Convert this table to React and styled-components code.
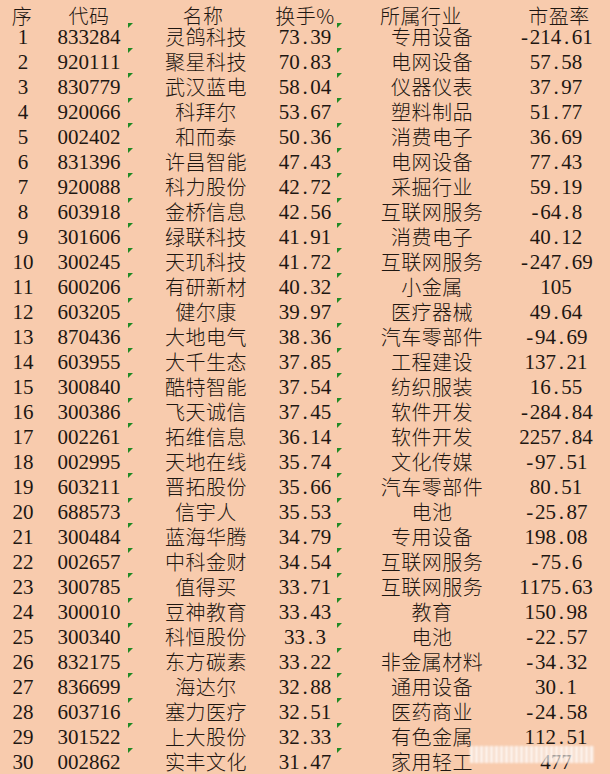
import React from "react";
import styled, { createGlobalStyle } from "styled-components";

const rows = [
  ["1", "833284", "灵鸽科技", "73.39", "专用设备", "-214.61"],
  ["2", "920111", "聚星科技", "70.83", "电网设备", "57.58"],
  ["3", "830779", "武汉蓝电", "58.04", "仪器仪表", "37.97"],
  ["4", "920066", "科拜尔", "53.67", "塑料制品", "51.77"],
  ["5", "002402", "和而泰", "50.36", "消费电子", "36.69"],
  ["6", "831396", "许昌智能", "47.43", "电网设备", "77.43"],
  ["7", "920088", "科力股份", "42.72", "采掘行业", "59.19"],
  ["8", "603918", "金桥信息", "42.56", "互联网服务", "-64.8"],
  ["9", "301606", "绿联科技", "41.91", "消费电子", "40.12"],
  ["10", "300245", "天玑科技", "41.72", "互联网服务", "-247.69"],
  ["11", "600206", "有研新材", "40.32", "小金属", "105"],
  ["12", "603205", "健尔康", "39.97", "医疗器械", "49.64"],
  ["13", "870436", "大地电气", "38.36", "汽车零部件", "-94.69"],
  ["14", "603955", "大千生态", "37.85", "工程建设", "137.21"],
  ["15", "300840", "酷特智能", "37.54", "纺织服装", "16.55"],
  ["16", "300386", "飞天诚信", "37.45", "软件开发", "-284.84"],
  ["17", "002261", "拓维信息", "36.14", "软件开发", "2257.84"],
  ["18", "002995", "天地在线", "35.74", "文化传媒", "-97.51"],
  ["19", "603211", "晋拓股份", "35.66", "汽车零部件", "80.51"],
  ["20", "688573", "信宇人", "35.53", "电池", "-25.87"],
  ["21", "300484", "蓝海华腾", "34.79", "专用设备", "198.08"],
  ["22", "002657", "中科金财", "34.54", "互联网服务", "-75.6"],
  ["23", "300785", "值得买", "33.71", "互联网服务", "1175.63"],
  ["24", "300010", "豆神教育", "33.43", "教育", "150.98"],
  ["25", "300340", "科恒股份", "33.3", "电池", "-22.57"],
  ["26", "832175", "东方碳素", "33.22", "非金属材料", "-34.32"],
  ["27", "836699", "海达尔", "32.88", "通用设备", "30.1"],
  ["28", "603716", "塞力医疗", "32.51", "医药商业", "-24.58"],
  ["29", "301522", "上大股份", "32.33", "有色金属", "112.51"],
  ["30", "002862", "实丰文化", "31.47", "家用轻工", "477"],
];

const GlobalStyle = createGlobalStyle`
  html, body {
    margin: 0;
    padding: 0;
    background: #f8cbad;
  }
`;

const Sheet = styled.div`
  width: 610px;
  height: 774px;
  overflow: hidden;
  position: relative;
  background: #f8cbad;
  color: #1e1712;
`;

const Row = styled.div`
  position: relative;
  display: grid;
  grid-template-columns: 44px 90px 138px 66px 188px 60px 1fr;
  height: ${(p) => (p.$head ? 23 : 25)}px;
`;

const Cell = styled.div`
  display: flex;
  justify-content: center;
  align-items: flex-end;
  white-space: nowrap;
  padding-left: ${(p) => Math.max(p.$shift || 0, 0) * 2}px;
  padding-right: ${(p) => Math.max(-(p.$shift || 0), 0) * 2}px;
`;

const Cjk = styled.span`
  font-family: "Noto Sans CJK SC", "Noto Sans", sans-serif;
  font-weight: 300;
  font-size: 20px;
  letter-spacing: 0.5px;
  line-height: 20px;
  margin-bottom: ${(p) => (p.$head ? -3 : 1)}px;
`;

const NumText = styled.span`
  font-family: "Liberation Serif", "Noto Sans CJK SC", serif;
  font-size: 21px;
  line-height: 21px;
`;

const Ch = styled.span`
  display: inline-block;
  width: 0.5em;
  text-align: center;
`;

const Flag = styled.span`
  position: absolute;
  top: 0;
  left: ${(p) => p.$x}px;
  width: 0;
  height: 0;
  border-top: 5px solid #1f8a24;
  border-right: 5px solid transparent;
`;

const Watermark = styled.div`
  position: absolute;
  left: 470px;
  top: 746px;
  width: 124px;
  height: 17px;
  background: repeating-linear-gradient(
    90deg,
    rgba(255, 255, 255, 0.9) 0 3px,
    rgba(240, 225, 215, 0.55) 3px 5px
  );
  filter: blur(1.2px);
  opacity: 0.9;
`;

const Num = ({ value }) => (
  <NumText>
    {[...value].map((c, i) => (
      <Ch key={i}>{c}</Ch>
    ))}
  </NumText>
);

export default function App() {
  return (
    <Sheet>
      <GlobalStyle />
      <Row $head>
        <Cell><Cjk $head>序</Cjk></Cell>
        <Cell><Cjk $head>代码</Cjk></Cell>
        <Cell><Cjk $head>名称</Cjk></Cell>
        <Cell><Cjk $head>换手%</Cjk></Cell>
        <Cell $shift={-11}><Cjk $head>所属行业</Cjk></Cell>
        <Cell $shift={3}><Cjk $head>市盈率</Cjk></Cell>
        <Cell />
      </Row>
      {rows.map((r) => (
        <Row key={r[0]}>
          <Cell $shift={1}><Num value={r[0]} /></Cell>
          <Cell><Num value={r[1]} /></Cell>
          <Cell $shift={3}><Cjk>{r[2]}</Cjk></Cell>
          <Cell><Num value={r[3]} /></Cell>
          <Cell><Cjk>{r[4]}</Cjk></Cell>
          <Cell><Num value={r[5]} /></Cell>
          <Cell />
          <Flag $x={128} />
          <Flag $x={337} />
        </Row>
      ))}
      <Watermark />
    </Sheet>
  );
}
